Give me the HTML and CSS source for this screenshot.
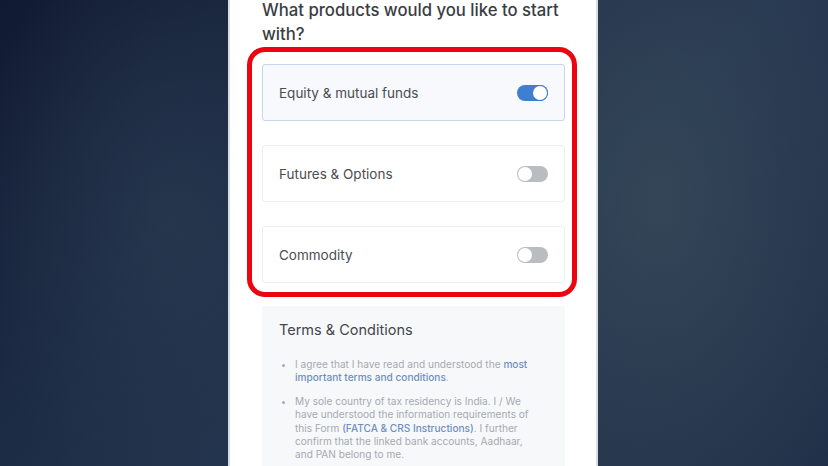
FILE: index.html
```html
<!DOCTYPE html>
<html>
<head>
<meta charset="utf-8">
<link rel="stylesheet" href="styles.css">
</head>
<body>
<div class="panel">
  <h1 class="title">What products would you like to start with?</h1>
  <div class="highlight">
    <div class="card card-active">
      <span class="card-label">Equity &amp; mutual funds</span>
      <span class="toggle toggle-on"><span class="knob"></span></span>
    </div>
    <div class="card">
      <span class="card-label">Futures &amp; Options</span>
      <span class="toggle"><span class="knob"></span></span>
    </div>
    <div class="card">
      <span class="card-label">Commodity</span>
      <span class="toggle"><span class="knob"></span></span>
    </div>
  </div>
  <div class="terms">
    <h2 class="terms-title">Terms &amp; Conditions</h2>
    <ul class="terms-list">
      <li>I agree that I have read and understood the <a class="link">most important terms and conditions</a>.</li>
      <li>My sole country of tax residency is India. I / We have understood the information requirements of this Form <a class="link">(FATCA &amp; CRS Instructions)</a>. I further confirm that the linked bank accounts, Aadhaar, and PAN belong to me.</li>
    </ul>
  </div>
</div>
</body>
</html>
```
FILE: styles.css
```css
html, body {
  margin: 0;
  height: 100%;
  overflow: hidden;
}
body {
  background:
    radial-gradient(ellipse 260px 420px at 660px 200px, rgba(54,72,88,0.85) 0%, rgba(40,58,80,0) 100%),
    radial-gradient(ellipse 200px 300px at 170px 220px, rgba(44,62,84,0.6) 0%, rgba(40,58,80,0) 100%),
    linear-gradient(135deg, #111a33 0%, #1d2c45 35%, #243650 60%, #1f2e47 100%);
  font-family: Inter, "Noto Sans", sans-serif;
}
.panel {
  width: 366px;
  height: 100%;
  margin-left: 228px;
  background: #ffffff;
  border-left: 2px solid #d9dde2;
  border-right: 2px solid #d9dde2;
  overflow: hidden;
}
.title {
  margin: -2px 0 0 32px;
  font-size: 16.7px;
  line-height: 24px;
  font-weight: 500;
  color: #3a3d42;
  width: 310px;
  height: 49px;
}
.highlight {
  margin-left: 17px;
  width: 303px;
  border: 5px solid #ec0510;
  border-radius: 18px;
  padding: 12px 7px 9px 10px;
  display: flex;
  flex-direction: column;
  gap: 24px;
}
.card {
  height: 55px;
  border: 1px solid #eceef1;
  border-radius: 3px;
  display: flex;
  align-items: center;
  justify-content: space-between;
  padding: 0 16px;
  background: #ffffff;
}
.card-active {
  border-color: #c6d6ec;
  background: #f7f9fc;
}
.card-label {
  font-size: 13.5px;
  color: #4a4d52;
}
.toggle {
  width: 31px;
  height: 16px;
  border-radius: 8px;
  background: #b9bcc0;
  display: flex;
  align-items: center;
  padding: 0 1px;
  box-sizing: border-box;
}
.knob {
  width: 14px;
  height: 14px;
  border-radius: 50%;
  background: #ffffff;
}
.toggle-on {
  background: #3e7fd0;
  justify-content: flex-end;
}
.toggle-on .knob {
  box-shadow: 0 0 0 1px #3e7fd0;
}
.terms {
  margin: 9px 0 0 32px;
  width: 303px;
  height: 170px;
  background: #f7f8fa;
  padding: 15px 0 0 17px;
  box-sizing: border-box;
  overflow: hidden;
}
.terms-title {
  margin: 0;
  font-size: 14.5px;
  font-weight: 400;
  color: #43464b;
  line-height: 18px;
}
.terms-list {
  margin: 19px 0 0 0;
  padding-left: 16px;
  width: 236px;
  font-size: 10.1px;
  line-height: 13.4px;
  color: #a6aab0;
}
.terms-list li {
  margin-bottom: 10px;
}
.link {
  color: #6e8fbe;
  font-weight: 500;
}
```
